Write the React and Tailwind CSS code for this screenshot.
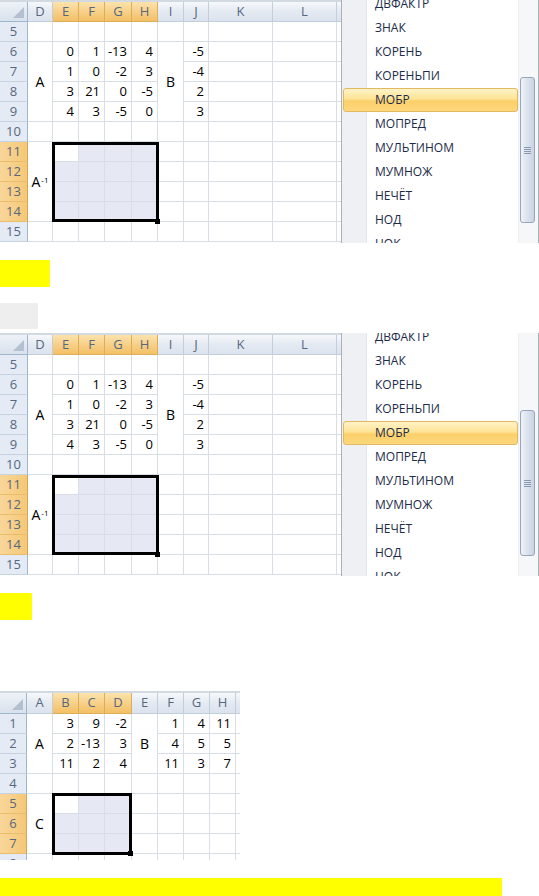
import React from "react";

const n = (v) => ({ v: String(v) });
const e = {};
const s = { f: "sel" };
const act = { f: "act" };
const empties = (k) => Array.from({ length: k }, () => e);

const FUNCS = [
  "ДВФАКТР",
  "ЗНАК",
  "КОРЕНЬ",
  "КОРЕНЬПИ",
  "МОБР",
  "МОПРЕД",
  "МУЛЬТИНОМ",
  "МУМНОЖ",
  "НЕЧЁТ",
  "НОД",
  "НОК",
];

// columns D..M, rows 5..15
const COLS1 = ["D", "E", "F", "G", "H", "I", "J", "K", "L", "M"];
const SEL1 = ["E", "F", "G", "H"];
const ROWS1 = [5, 6, 7, 8, 9, 10, 11, 12, 13, 14, 15].map((r) => ({
  n: r,
  sel: r >= 11 && r <= 14,
}));
const DATA1 = [
  empties(10),
  [{ v: "A", m: "row-span-4" }, n(0), n(1), n(-13), n(4), { v: "B", m: "row-span-4" }, n(-5), e, e, e],
  [n(1), n(0), n(-2), n(3), n(-4), e, e, e],
  [n(3), n(21), n(0), n(-5), n(2), e, e, e],
  [n(4), n(3), n(-5), n(0), n(3), e, e, e],
  empties(10),
  [{ v: "A", sup: "-1", m: "row-span-4" }, act, s, s, s, e, e, e, e, e],
  [s, s, s, s, e, e, e, e, e],
  [s, s, s, s, e, e, e, e, e],
  [s, s, s, s, e, e, e, e, e],
  empties(10),
];

// columns A..I, rows 1..8
const COLS3 = ["A", "B", "C", "D", "E", "F", "G", "H", "I"];
const SEL3 = ["B", "C", "D"];
const ROWS3 = [1, 2, 3, 4, 5, 6, 7, 8].map((r) => ({
  n: r,
  sel: r >= 5 && r <= 7,
}));
const DATA3 = [
  [{ v: "A", m: "row-span-3" }, n(3), n(9), n(-2), { v: "B", m: "row-span-3" }, n(1), n(4), n(11), e],
  [n(2), n(-13), n(3), n(4), n(5), n(5), e],
  [n(11), n(2), n(4), n(11), n(3), n(7), e],
  empties(9),
  [{ v: "C", m: "row-span-3" }, act, s, s, e, e, e, e, e],
  [s, s, s, e, e, e, e, e],
  [s, s, s, e, e, e, e, e],
  empties(9),
];

function Corner() {
  return (
    <div className="relative border-r border-b border-[#9eb6ce] bg-[linear-gradient(to_bottom,#eef2f7,#d9e1ec)]">
      <svg className="absolute right-[3px] bottom-[3px]" width="11" height="11" viewBox="0 0 11 11">
        <polygon points="11,0 11,11 0,11" fill="#b4c0cf" />
      </svg>
    </div>
  );
}

function HeadCell({ label, sel }) {
  return (
    <div
      className={`flex items-center justify-center border-r border-b text-[13px] text-[#566880] ${
        sel
          ? "border-[#dcae57] bg-[linear-gradient(to_bottom,#fbe3ad,#f7d089_50%,#f3c066)]"
          : "border-[#c2cedb] bg-[linear-gradient(to_bottom,#f6f8fb,#e4eaf2_50%,#dbe3ee)]"
      }`}
    >
      {label}
    </div>
  );
}

function RowHead({ label, sel }) {
  return (
    <div
      className={`flex items-center justify-center border-r border-b text-[13px] text-[#566880] ${
        sel
          ? "border-r-[#d9a54d] border-b-[#e9bd6c] bg-[linear-gradient(to_right,#f9d69a,#f5c877)]"
          : "border-r-[#9eb6ce] border-b-[#c5d2e0] bg-[#e4ebf5]"
      }`}
    >
      {label}
    </div>
  );
}

function Cell({ v, sup, m, f }) {
  const bg = f === "sel" ? "bg-[#e6e9f3]" : "bg-white";
  if (m) {
    return (
      <div className={`${m} flex items-center justify-center border-r border-b border-[#d8dee8] bg-white text-[14px] text-black`}>
        <span>
          {v}
          {sup && <sup className="text-[8px] ml-px">{sup}</sup>}
        </span>
      </div>
    );
  }
  return (
    <div className={`flex items-center justify-end pr-[4px] border-r border-b border-[#d8dee8] text-[13px] text-black ${bg}`}>
      {v}
    </div>
  );
}

function Sheet({ gridCls, cols, selCols, rows, data }) {
  return (
    <div className={`grid ${gridCls}`}>
      <Corner />
      {cols.map((c) => (
        <HeadCell key={c} label={c} sel={selCols.includes(c)} />
      ))}
      {rows.map((r, i) => (
        <React.Fragment key={r.n}>
          <RowHead label={r.n} sel={r.sel} />
          {data[i].map((c, j) => (
            <Cell key={j} {...c} />
          ))}
        </React.Fragment>
      ))}
    </div>
  );
}

function FuncList() {
  return (
    <div className="absolute left-[341px] top-0 bottom-0 w-[198px] flex border-l border-r border-[#a9b0b8] bg-white overflow-hidden">
      <div className="flex-1 bg-[linear-gradient(to_right,#eef0f3_24px,#e1e4e8_24px,#e1e4e8_25px,#ffffff_25px)]">
        <div className="-mt-[8px] flex flex-col">
          {FUNCS.map((t, i) =>
            i === 4 ? (
              <div
                key={t}
                className="h-[24px] ml-[1px] pl-[31px] flex items-center rounded-[3px] border border-[#e2b860] bg-[linear-gradient(to_bottom,#fff3c8,#fde394_45%,#fbd06a_55%,#fcd77c)] text-[12px] font-medium text-[#1d2b49]"
              >
                {t}
              </div>
            ) : (
              <div key={t} className="h-[24px] pl-[33px] flex items-center text-[12px] font-medium text-[#1d2b49]">
                {t}
              </div>
            )
          )}
        </div>
      </div>
      <div className="w-[20px] border-l border-[#eceef1] bg-[#f6f7f9]">
        <div className="mt-[77px] ml-[1px] w-[15px] h-[146px] rounded-[3px] border border-[#97a5ba] bg-[linear-gradient(to_right,#eef2f8,#d7dfea_60%,#c9d3e1)] flex flex-col items-center justify-center gap-[1px]">
          <div className="w-[7px] h-px bg-[#8a99b0]" />
          <div className="w-[7px] h-px bg-[#8a99b0]" />
          <div className="w-[7px] h-px bg-[#8a99b0]" />
          <div className="w-[7px] h-px bg-[#8a99b0]" />
        </div>
      </div>
    </div>
  );
}

function SheetOne() {
  return (
    <div className="relative w-[539px] h-[243px] overflow-hidden bg-white">
      <div className="h-[2px] bg-[#d3d9e1]" />
      <Sheet
        gridCls="grid-cols-[28px_25px_26px_26px_27px_26px_26px_25px_64px_64px_64px] grid-rows-[20px] auto-rows-[20px]"
        cols={COLS1}
        selCols={SEL1}
        rows={ROWS1}
        data={DATA1}
      />
      <div className="absolute left-[52px] top-[142px] w-[107px] h-[80px] border-[3px] border-black" />
      <div className="absolute left-[155px] top-[219px] w-[5px] h-[5px] bg-black" />
      <FuncList />
    </div>
  );
}

function SheetThree() {
  return (
    <div className="relative w-[240px] h-[169px] overflow-hidden bg-white">
      <div className="h-[2px] bg-[#d3d9e1]" />
      <Sheet
        gridCls="grid-cols-[27px_26px_26px_26px_27px_26px_26px_26px_26px_26px] grid-rows-[21px] auto-rows-[20px]"
        cols={COLS3}
        selCols={SEL3}
        rows={ROWS3}
        data={DATA3}
      />
      <div className="absolute left-[52px] top-[102px] w-[80px] h-[62px] border-[3px] border-black" />
      <div className="absolute left-[128px] top-[160px] w-[5px] h-[5px] bg-black" />
    </div>
  );
}

export default function App() {
  return (
    <div className="w-[539px] h-[896px] bg-white overflow-hidden flex flex-col items-start font-['Open_Sans',sans-serif]">
      <SheetOne />
      <div className="mt-[17px] w-[50px] h-[27px] bg-[#ffff00]" />
      <div className="mt-[16px] w-[38px] h-[26px] bg-[#eeeeee]" />
      <div className="mt-[4px]">
        <SheetOne />
      </div>
      <div className="mt-[17px] w-[32px] h-[27px] bg-[#ffff00]" />
      <div className="mt-[71px]">
        <SheetThree />
      </div>
      <div className="mt-[18px] w-[502px] h-[18px] bg-[#ffff00]" />
    </div>
  );
}
